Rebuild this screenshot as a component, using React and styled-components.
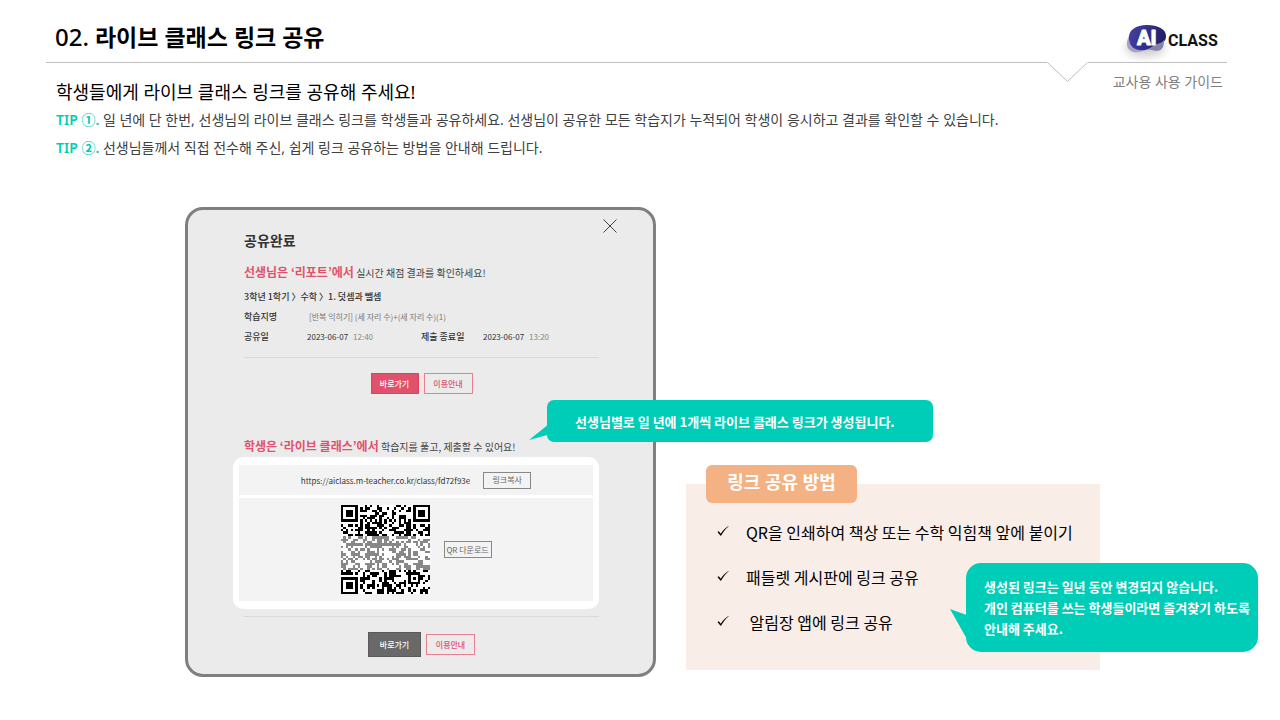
import styled, { createGlobalStyle } from "styled-components";

const GlobalStyle = createGlobalStyle`
  * { box-sizing: border-box; }
  body {
    margin: 0;
    background: #fff;
    color: #000;
    font-family: "Noto Sans", "Noto Sans CJK KR", sans-serif;
  }
  h1, h2, h3, p, ul, dl, dd { margin: 0; padding: 0; }
  button { font-family: inherit; cursor: pointer; }
`;

const Header = styled.header`
  display: flex;
  justify-content: space-between;
  align-items: flex-end;
  height: 62px;
  padding: 0 53px 0 55px;
`;

const PageTitle = styled.h1`
  font-size: 23px;
  line-height: 50px;
  font-weight: 700;

  span {
    font-size: 24px;
    font-weight: 500;
  }
`;

const Divider = styled.div`
  display: flex;
  height: 10px;
  padding: 0 53px 0 46px;

  svg {
    flex: none;
    overflow: visible;
  }
`;

const Line = styled.div`
  flex: ${(props) => (props.$width ? `0 0 ${props.$width}` : "1")};
  height: 1px;
  background: #bfbfbf;
`;

const Intro = styled.section`
  display: flex;
  justify-content: space-between;
  align-items: flex-start;
  padding: 0 57px 0 56px;
`;

const IntroText = styled.div`
  padding-top: 6px;
`;

const Subtitle = styled.h2`
  font-size: 18px;
  line-height: 28px;
  font-weight: 400;
`;

const Tip = styled.p`
  font-size: 14px;
  line-height: 28px;
  color: #404040;

  b {
    color: #00cdb7;
    font-weight: 600;
  }
`;

const GuideLabel = styled.p`
  flex: none;
  font-size: 14px;
  line-height: 20px;
  color: #7f7f7f;
`;

const Main = styled.main`
  display: grid;
  grid-template-columns: 471fr 414fr;
  column-gap: 30px;
  padding: 45px 180px 40px 185px;
`;

const Card = styled.section`
  position: relative;
  padding: 9px 54px 17px 56px;
  border: 3px solid #7f7f7f;
  border-radius: 18px;
  background: #ebebeb;
  font-family: "Noto Sans CJK KR", sans-serif;
  color: #333;
`;

const CardHead = styled.div`
  display: flex;
  justify-content: space-between;
  align-items: flex-start;
  margin-right: -18px;
`;

const CardTitle = styled.h2`
  padding-top: 10px;
  font-size: 14px;
  line-height: 22px;
  font-weight: 700;
  color: #333;
`;

const CloseButton = styled.button`
  display: flex;
  padding: 0;
  border: 0;
  background: none;
`;

const Headline = styled.h3`
  margin-top: ${(props) => props.$top};
  font-size: 10px;
  line-height: 20px;
  font-weight: 400;
  white-space: nowrap;
  color: #444;

  strong {
    font-size: 12px;
    line-height: 12px;
    font-weight: 700;
    color: #e0526b;
  }
`;

const Breadcrumb = styled.p`
  margin-top: 4px;
  font-size: 9px;
  line-height: 20px;
  font-weight: 500;
`;

const Details = styled.dl`
  display: grid;
  grid-template-columns: 63fr 114fr 62fr 116fr;
  line-height: 20px;
  font-size: 9px;
  white-space: nowrap;

  dt { font-weight: 500; }
`;

const Worksheet = styled.dd`
  grid-column: span 3;
  padding-left: 2px;
  font-size: 8px;
  color: #777;
`;

const DateTime = styled.dd`
  display: flex;
  gap: 5px;
  font-size: 8px;

  span { color: #888; }
`;

const Rule = styled.hr`
  height: 1px;
  margin: ${(props) => props.$top} 0 15px;
  border: 0;
  background: #d9d9d9;
`;

const Actions = styled.div`
  display: flex;
  justify-content: center;
  align-items: center;
  gap: 5px;
`;

const palette = {
  pink: ["#e0526b", "#e0435f", "#fff"],
  dark: ["#696969", "#5a5a5a", "#fff"],
  outline: ["transparent", "#e8808f", "#e0526b"],
  plain: ["transparent", "#888", "#666"],
};

const Button = styled.button`
  width: ${(props) => props.$width || "49px"};
  height: ${(props) => props.$height || "21px"};
  padding: 0;
  border: 1px solid ${(props) => palette[props.$kind][1]};
  background: ${(props) => palette[props.$kind][0]};
  color: ${(props) => palette[props.$kind][2]};
  font-size: 8px;
  line-height: 12px;
  font-weight: ${(props) => (props.$kind === "plain" ? 400 : 500)};
  white-space: nowrap;
`;

const LinkBox = styled.div`
  display: grid;
  gap: 3px;
  margin-left: -11px;
  padding: 8px 6px;
  border-radius: 10px;
  background: #fff;
`;

const LinkRow = styled.div`
  display: flex;
  justify-content: center;
  align-items: center;
  gap: ${(props) => props.$gap};
  height: ${(props) => props.$height};
  background: #f3f3f3;
`;

const ClassLink = styled.a`
  font-size: 8px;
  color: #333;
  text-decoration: none;
`;

const Panel = styled.section`
  position: relative;
  align-self: end;
  margin-bottom: 7px;
  padding: 0 20px 25px;
  background: #f8ede7;
`;

const PanelTitle = styled.h2`
  width: 151px;
  height: 38px;
  margin-top: -19px;
  border-radius: 6px;
  background: #f4b183;
  color: #fff;
  font-size: 18px;
  line-height: 34px;
  font-weight: 700;
  text-align: center;
`;

const Methods = styled.ul`
  padding: 7px 0 0 11px;
  list-style: none;
`;

const Method = styled.li`
  display: flex;
  align-items: center;
  gap: 17px;
  font-family: "Noto Sans CJK KR", sans-serif;
  font-size: 16px;
  line-height: 45px;
  white-space: pre;

  svg { margin-bottom: 3px; }
`;

const Callout = styled.p`
  position: absolute;
  z-index: 1;
  background: #00cdb7;
  color: #fff;
  font-family: "Noto Sans CJK KR", sans-serif;
  font-size: 13px;
  line-height: 21px;
  font-weight: 700;
  white-space: nowrap;

  &::before {
    content: "";
    position: absolute;
    background: inherit;
  }
`;

const YearCallout = styled(Callout)`
  left: 359px;
  top: 190px;
  width: 386px;
  padding: 11px 28px 10px;
  border-radius: 7px;

  &::before {
    left: -18px;
    top: 24px;
    width: 20px;
    height: 16px;
    clip-path: polygon(0 100%, 100% 0, 100% 65%);
  }
`;

const KeepCallout = styled(Callout)`
  left: 280px;
  top: 79px;
  width: 292px;
  padding: 13px 10px 13px 18px;
  border-radius: 15px;

  &::before {
    left: -16px;
    top: 46px;
    width: 18px;
    height: 32px;
    clip-path: polygon(0 0, 100% 20%, 100% 100%);
  }
`;

function Logo() {
  return (
    <svg width="115" height="50" viewBox="0 0 115 50" role="img" aria-label="AI CLASS">
      <defs>
        <linearGradient id="blob" x1="0" y1="0.3" x2="1" y2="0.5">
          <stop offset="0" stopColor="#4440a0" />
          <stop offset="0.6" stopColor="#2f2c86" />
          <stop offset="1" stopColor="#201d5e" />
        </linearGradient>
        <filter id="soft" x="-40%" y="-60%" width="180%" height="240%">
          <feGaussianBlur stdDeviation="4" />
        </filter>
      </defs>
      <ellipse cx="33" cy="36" rx="20" ry="9" fill="#000" opacity="0.18" filter="url(#soft)" />
      <path d="M17 24C14 30 14 36 19 39C24 42 29 39 35 38C40 37 44 40 48 38C52 36 52 31 49 28Z" fill="#a3a1c8" />
      <path d="M17 27C16 18 24 13 35 13C46 13 54 17 54 24C54 29 51 31 46 32C42 33 41 35 36 37C28 40 18 38 17 27Z" fill="url(#blob)" />
      <path d="M52 28C50 31 47 31.500 44 32.500C41 33.500 40 36 36 37.500C40 37 44 40 48 38C52 36 52 31 52 28Z" fill="#8583ad" />
      <text x="25" y="33" fill="#fff" stroke="#fff" strokeWidth="0.8" strokeLinejoin="round" fontFamily="Roboto, sans-serif" fontSize="20" fontWeight="900">AI</text>
      <text x="56" y="34" fill="#111" fontFamily="Roboto, sans-serif" fontSize="16" fontWeight="700">CLASS</text>
    </svg>
  );
}

const QR_SIZE = 37;

// rings of a locator mark, counted from its centre
function ring(x, y, cx, cy) {
  return Math.max(Math.abs(x - cx), Math.abs(y - cy));
}

function mix(n) {
  n = Math.imul(n ^ (n >>> 16), 0x7feb352d);
  n = Math.imul(n ^ (n >>> 15), 0x846ca68b);
  return (n ^ (n >>> 16)) >>> 0;
}

function isDark(x, y) {
  for (const [cx, cy] of [[3, 3], [QR_SIZE - 4, 3], [3, QR_SIZE - 4]]) {
    const r = ring(x, y, cx, cy);
    if (r <= 3) return r !== 2;
    if (r === 4) return false;
  }
  const a = ring(x, y, 30, 30);
  if (a <= 2) return a !== 1;
  if (x === 6 || y === 6) return (x + y) % 2 === 0;
  return mix(y * QR_SIZE + x + 977) % 100 < 51;
}

function QrCode() {
  const cells = [];
  for (let y = 0; y < QR_SIZE; y++) {
    for (let x = 0; x < QR_SIZE; x++) {
      if (isDark(x, y)) {
        const faded = y > 12 && y < 27;
        cells.push(
          <rect key={`${x}-${y}`} x={x} y={y} width="1" height="1" fill={faded ? "#888" : "#000"} />
        );
      }
    }
  }
  return (
    <svg width="89" height="89" viewBox="0 0 37 37" shapeRendering="crispEdges" role="img" aria-label="QR">
      <rect width="37" height="37" fill="#fff" />
      {cells}
    </svg>
  );
}

function Check() {
  return (
    <svg width="12" height="12" viewBox="0 0 12 12" aria-hidden="true">
      <path d="M0.500 7L1.800 6.200L3.800 8.800C6 5.300 8.500 2.800 11.500 1L11.700 1.300C8.600 4 6.200 7 4.200 10.600L3.500 10.800Z" fill="#000" />
    </svg>
  );
}

function App() {
  return (
    <>
      <GlobalStyle />
      <Header>
        <PageTitle><span>02.</span> 라이브 클래스 링크 공유</PageTitle>
        <Logo />
      </Header>
      <Divider>
        <Line />
        <svg width="41" height="20" viewBox="0 0 41 20" aria-hidden="true">
          <path d="M0.500 0.500L20.500 19.500L40.500 0.500" fill="none" stroke="#bfbfbf" />
        </svg>
        <Line $width="139px" />
      </Divider>

      <Intro>
        <IntroText>
          <Subtitle>학생들에게 라이브 클래스 링크를 공유해 주세요!</Subtitle>
          <Tip><b>TIP ①.</b> 일 년에 단 한번, 선생님의 라이브 클래스 링크를 학생들과 공유하세요. 선생님이 공유한 모든 학습지가 누적되어 학생이 응시하고 결과를 확인할 수 있습니다.</Tip>
          <Tip><b>TIP ②.</b> 선생님들께서 직접 전수해 주신, 쉽게 링크 공유하는 방법을 안내해 드립니다.</Tip>
        </IntroText>
        <GuideLabel>교사용 사용 가이드</GuideLabel>
      </Intro>

      <Main>
        <Card>
          <CardHead>
            <CardTitle>공유완료</CardTitle>
            <CloseButton type="button" aria-label="닫기">
              <svg width="14" height="14" viewBox="0 0 14 14">
                <path d="M0.500 0.500L13.500 13.500M13.500 0.500L0.500 13.500" stroke="#444" fill="none" />
              </svg>
            </CloseButton>
          </CardHead>

          <Headline $top="12px"><strong>선생님은 ‘리포트’에서</strong> 실시간 채점 결과를 확인하세요!</Headline>
          <Breadcrumb>3학년 1학기 〉수학 〉1. 덧셈과 뺄셈</Breadcrumb>
          <Details>
            <dt>학습지명</dt>
            <Worksheet>[반복 익히기] (세 자리 수)+(세 자리 수)(1)</Worksheet>
            <dt>공유일</dt>
            <DateTime>2023-06-07 <span>12:40</span></DateTime>
            <dt>제출 종료일</dt>
            <DateTime>2023-06-07 <span>13:20</span></DateTime>
          </Details>
          <Rule $top="10px" />
          <Actions>
            <Button type="button" $kind="pink" $width="48px">바로가기</Button>
            <Button type="button" $kind="outline">이용안내</Button>
          </Actions>

          <Headline $top="43px"><strong>학생은 ‘라이브 클래스’에서</strong> 학습지를 풀고, 제출할 수 있어요!</Headline>
          <LinkBox>
            <LinkRow $height="30px" $gap="13px">
              <ClassLink href="https://aiclass.m-teacher.co.kr/class/fd72f93e">https://aiclass.m-teacher.co.kr/class/fd72f93e</ClassLink>
              <Button type="button" $kind="plain" $width="48px" $height="17px">링크복사</Button>
            </LinkRow>
            <LinkRow $height="103px" $gap="14px">
              <QrCode />
              <Button type="button" $kind="plain" $width="48px" $height="17px">QR 다운로드</Button>
            </LinkRow>
          </LinkBox>
          <Rule $top="7px" />
          <Actions>
            <Button type="button" $kind="dark" $width="53px" $height="25px">바로가기</Button>
            <Button type="button" $kind="outline">이용안내</Button>
          </Actions>

          <YearCallout>선생님별로 일 년에 1개씩 라이브 클래스 링크가 생성됩니다.</YearCallout>
        </Card>

        <Panel>
          <PanelTitle>링크 공유 방법</PanelTitle>
          <Methods>
            <Method><Check />QR을 인쇄하여 책상 또는 수학 익힘책 앞에 붙이기</Method>
            <Method><Check />패들렛 게시판에 링크 공유</Method>
            <Method><Check />{" 알림장 앱에 링크 공유"}</Method>
          </Methods>
          <KeepCallout>
            생성된 링크는 일년 동안 변경되지 않습니다.<br />
            개인 컴퓨터를 쓰는 학생들이라면 즐겨찾기 하도록<br />
            안내해 주세요.
          </KeepCallout>
        </Panel>
      </Main>
    </>
  );
}

export default App;
